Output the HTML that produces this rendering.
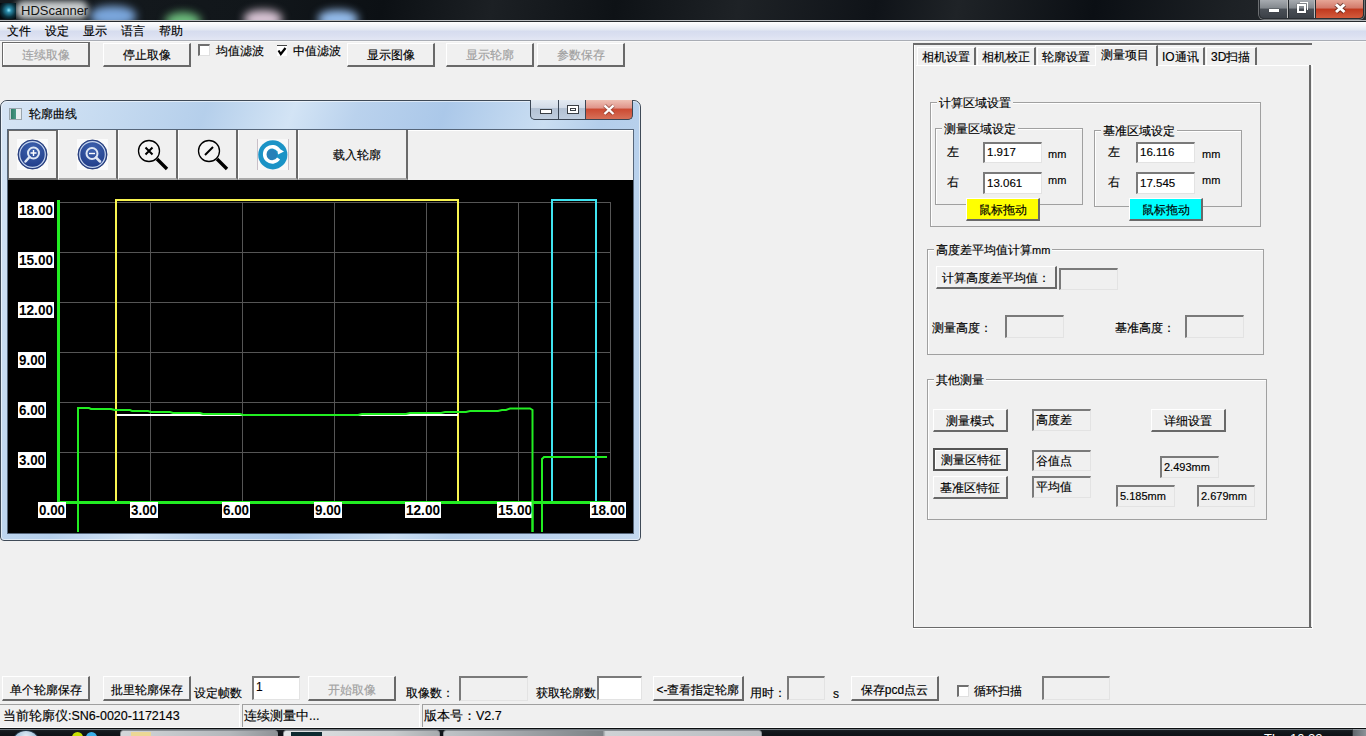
<!DOCTYPE html>
<html><head><meta charset="utf-8">
<style>
*{box-sizing:border-box;margin:0;padding:0}
html,body{width:1366px;height:736px;overflow:hidden;background:#f0f0f0;font-family:"Liberation Sans",sans-serif;font-size:12px;color:#000}
.t,.btn,.edit,.gt{-webkit-text-stroke:0.15px currentColor}
.a{position:absolute}
.t{position:absolute;white-space:nowrap;line-height:12px;font-size:12px}
/* classic 3d button */
.btn{position:absolute;background:#f0f0f0;border-top:1px solid #fff;border-left:1px solid #fff;border-right:2px solid #696969;border-bottom:2px solid #696969;text-align:center;white-space:nowrap;font-size:12px;line-height:12px}
.btn span{position:absolute;left:0;right:0;top:50%;margin-top:-5.5px}
.b25 span{margin-top:-4.5px}
.dis{color:#a0a0a0}
.edit{position:absolute;background:#fff;border-top:2px solid #7a7a7a;border-left:2px solid #7a7a7a;border-right:1px solid #e3e3e3;border-bottom:1px solid #e3e3e3;font-size:12px;line-height:12px;white-space:nowrap;padding-left:2px}
.ro{background:#f0f0f0}
.grp{position:absolute;border:1px solid #a0a0a0;box-shadow:1px 1px 0 #fff inset}
.grp .gt{position:absolute;top:-6px;left:6px;background:#f0f0f0;padding:0 2px;line-height:12px;font-size:12px;white-space:nowrap}
.chk{position:absolute;width:12px;height:12px;background:#fff;border-top:2px solid #6f6f6f;border-left:2px solid #6f6f6f;border-right:1px solid #e0e0e0;border-bottom:1px solid #e0e0e0}
</style></head><body>

<!-- title bar -->
<div class="a" style="left:0;top:0;width:1366px;height:20px;background:linear-gradient(100deg,#151a1e 0%,#11161a 20%,#0c1014 28%,#1c2024 36%,#0e1216 45%,#1e2226 54%,#0f1318 64%,#1f2327 70%,#0b0f14 80%,#1d2125 90%,#2a2e32 100%)"></div>
<div class="a" style="left:90px;top:6px;width:46px;height:20px;border-radius:45%;background:#7aa6dc;filter:blur(4px);opacity:1"></div>
<div class="a" style="left:165px;top:12px;width:36px;height:18px;border-radius:50%;background:#6cbc7c;filter:blur(4px);opacity:1"></div>
<div class="a" style="left:244px;top:10px;width:38px;height:18px;border-radius:45%;background:#d8c4d4;filter:blur(4px);opacity:1"></div>
<div class="a" style="left:318px;top:10px;width:40px;height:18px;border-radius:45%;background:#94bcec;filter:blur(4px);opacity:1"></div>
<div class="a" style="left:16px;top:1px;width:72px;height:18px;border-radius:8px;background:rgba(235,238,240,.85);filter:blur(3px)"></div>
<div class="a" style="left:0;top:3px;width:16px;height:16px;background:radial-gradient(ellipse at 55% 45%,#8fe8ff 0,#2a8aa8 20%,#0b3340 55%,#050a0e 85%)"></div>
<div class="a" style="left:21px;top:3px;font:13px/15px 'Liberation Sans',sans-serif;color:#141414">HDScanner</div>
<div class="a" style="left:0;top:20px;width:1366px;height:1px;background:#b9bcbf"></div>
<div class="a" style="left:0;top:21px;width:1366px;height:1px;background:#262a2e"></div>
<!-- window controls -->
<div class="a" style="left:1259px;top:0;width:105px;height:19px;border:1px solid #2a2e33;border-top:none;border-radius:0 0 5px 5px;overflow:hidden;box-shadow:0 0 0 1px rgba(255,255,255,.35)">
 <div class="a" style="left:0;top:0;width:28px;height:18px;background:linear-gradient(#a7abb0,#82878d 45%,#4b5057 50%,#3b4047 100%);border-right:1px solid #bbb"></div>
 <div class="a" style="left:29px;top:0;width:26px;height:18px;background:linear-gradient(#a7abb0,#82878d 45%,#4b5057 50%,#3b4047 100%);border-right:1px solid #bbb"></div>
 <div class="a" style="left:56px;top:0;width:48px;height:18px;background:linear-gradient(#e6a596,#d2796a 45%,#c0381e 50%,#d35b3c 100%)"></div>
 <div class="a" style="left:9px;top:9px;width:10px;height:3px;background:#fff;box-shadow:0 0 1px #222"></div>
 <div class="a" style="left:37px;top:4px;width:9px;height:9px;border:2px solid #fff;box-shadow:0 0 1px #222"></div>
 <div class="a" style="left:40px;top:2px;width:8px;height:8px;border-top:1px solid #fff;border-right:1px solid #fff"></div>
 <svg class="a" style="left:56px;top:0" width="48" height="18"><path d="M20 4.5l8.5 7.5M28.5 4.5l-8.5 7.5" stroke="#3a1a14" stroke-opacity=".6" stroke-width="5"/><path d="M20 4.5l8.5 7.5M28.5 4.5l-8.5 7.5" stroke="#fff" stroke-width="3"/></svg>
</div>

<!-- menu bar -->
<div class="a" style="left:0;top:22px;width:1366px;height:18px;background:linear-gradient(#ffffff 0,#f3f5fa 20%,#e2e7f2 45%,#d6dcef 50%,#dbe0f1 75%,#e3e7f4 100%)"></div>
<div class="a" style="left:0;top:40px;width:1366px;height:1px;background:#a9adb5"></div>
<div class="a" style="left:0;top:41px;width:1366px;height:1px;background:#f8f8f8"></div>
<div class="t" style="left:7px;top:25px">文件</div>
<div class="t" style="left:45px;top:25px">设定</div>
<div class="t" style="left:83px;top:25px">显示</div>
<div class="t" style="left:121px;top:25px">语言</div>
<div class="t" style="left:159px;top:25px">帮助</div>

<!-- top toolbar -->
<div class="btn dis" style="left:2px;top:42px;width:88px;height:25px;border-top:1px solid #6a6a6a;border-left:1px solid #6a6a6a;box-shadow:inset 1px 1px 0 #fff"><span>连续取像</span></div>
<div class="btn" style="left:103px;top:43px;width:88px;height:24px"><span>停止取像</span></div>
<div class="chk" style="left:198px;top:44px"></div>
<div class="t" style="left:216px;top:45px">均值滤波</div>
<div class="a" style="left:277px;top:45px;width:10px;height:11px;background:#fff;border-top:1px solid #444"><svg class="a" style="left:0;top:0" width="10" height="10"><path d="M1.5 4.5l2.3 3.5l4.7-6" stroke="#000" stroke-width="2.2" fill="none"/></svg></div>
<div class="t" style="left:293px;top:45px">中值滤波</div>
<div class="btn" style="left:347px;top:43px;width:88px;height:24px"><span>显示图像</span></div>
<div class="btn dis" style="left:446px;top:43px;width:88px;height:24px"><span>显示轮廓</span></div>
<div class="btn dis" style="left:537px;top:43px;width:88px;height:24px"><span>参数保存</span></div>


<!-- chart window -->
<div class="a" style="left:0;top:100px;width:641px;height:441px;border:1px solid #3f4a57;border-radius:7px 7px 4px 4px;background:linear-gradient(110deg,#d6e5f5 0%,#c8dcf1 12%,#b5cfeb 26%,#d3e4f5 37%,#bad2ed 45%,#abc8e9 56%,#cadef2 69%,#b4ceeb 76%,#c3d8ef 100%)"></div>
<div class="a" style="left:1px;top:101px;width:639px;height:439px;border:1px solid rgba(255,255,255,.55);border-radius:6px 6px 3px 3px"></div>
<div class="a" style="left:9px;top:108px;width:13px;height:12px;background:linear-gradient(90deg,#c8d0d6 0,#c8d0d6 1px,#2f7c67 1px,#4a9a86 6px,#e9eef1 6px);border:1px solid #9aa6ae"></div>
<div class="t" style="left:29px;top:108px">轮廓曲线</div>
<!-- window buttons -->
<div class="a" style="left:530px;top:100px;width:103px;height:20px;border:1px solid #3b4654;border-top:none;border-radius:0 0 5px 5px;overflow:hidden;background:#3b4654">
 <div class="a" style="left:0;top:0;width:27px;height:19px;background:linear-gradient(#e3eaf2,#d3dce8 40%,#b3c1d3 45%,#c0cedf 100%)"></div>
 <div class="a" style="left:28px;top:0;width:26px;height:19px;background:linear-gradient(#e3eaf2,#d3dce8 40%,#b3c1d3 45%,#c0cedf 100%)"></div>
 <div class="a" style="left:55px;top:0;width:47px;height:19px;background:linear-gradient(#efc0b4,#e0948a 42%,#cc4a32 48%,#d77058 100%)"></div>
 <div class="a" style="left:9px;top:9px;width:12px;height:5px;background:#fff;border:1px solid #3a3f45"></div>
 <div class="a" style="left:36px;top:5px;width:12px;height:9px;border:1px solid #3a3f45;background:#fff"><div class="a" style="left:2px;top:2px;width:6px;height:3px;border:1px solid #3a3f45"></div></div>
 <svg class="a" style="left:55px;top:0" width="47" height="19"><path d="M18.5 5.5l9 8.5M27.5 5.5l-9 8.5" stroke="#7a3a30" stroke-opacity=".55" stroke-width="4.2"/><path d="M18.5 5.5l9 8.5M27.5 5.5l-9 8.5" stroke="#fff" stroke-width="2.4"/></svg>
</div>
<!-- client -->
<div class="a" style="left:7px;top:129px;width:627px;height:405px;background:#f0f0f0;border:1px solid #56667a"></div>
<div class="a" style="left:8px;top:130px;width:625px;height:1px;background:#fff"></div>
<!-- toolbar buttons -->
<div class="a" style="left:8px;top:130px;width:50px;height:50px;border:2px solid #696969;border-top:1px solid #696969;border-left:1px solid #696969;background:#f0f0f0"></div>
<div class="a" style="left:58px;top:130px;width:60px;height:50px;border-left:1px solid #fff;border-right:2px solid #6a6a6a;border-bottom:2px solid #a9a9a9;background:#f0f0f0"></div>
<div class="a" style="left:118px;top:130px;width:60px;height:50px;border-left:1px solid #fff;border-right:2px solid #6a6a6a;border-bottom:2px solid #a9a9a9;background:#f0f0f0"></div>
<div class="a" style="left:178px;top:130px;width:60px;height:50px;border-left:1px solid #fff;border-right:2px solid #6a6a6a;border-bottom:2px solid #a9a9a9;background:#f0f0f0"></div>
<div class="a" style="left:238px;top:130px;width:60px;height:50px;border-left:1px solid #fff;border-right:2px solid #6a6a6a;border-bottom:2px solid #a9a9a9;background:#f0f0f0"></div>
<div class="a" style="left:298px;top:130px;width:110px;height:50px;border-left:1px solid #fff;border-right:2px solid #6a6a6a;border-bottom:2px solid #a9a9a9;background:#f0f0f0"></div>
<div class="t" style="left:333px;top:149px">载入轮廓</div>
<svg class="a" style="left:0;top:0" width="640" height="545" viewBox="0 0 640 545">
 <defs><radialGradient id="bg1" cx="50%" cy="30%" r="70%"><stop offset="0" stop-color="#3f64b0"/><stop offset="1" stop-color="#1f3a86"/></radialGradient></defs>
 <rect x="17" y="139" width="31" height="31" fill="#fbfbfb"/>
 <circle cx="32.5" cy="154.5" r="14.5" fill="url(#bg1)" stroke="#263c78" stroke-width="1"/>
 <circle cx="32.5" cy="154.5" r="12.8" fill="none" stroke="#c6d4ec" stroke-width="1.2"/>
 <circle cx="33.5" cy="153" r="5.5" fill="none" stroke="#dfe7f4" stroke-width="2"/>
 <path d="M29.5 157 L25.5 161.5" stroke="#dfe7f4" stroke-width="2.5" stroke-linecap="round"/>
 <path d="M30.5 153h6M33.5 150v6" stroke="#fff" stroke-width="1.4"/>
 <rect x="77" y="139" width="31" height="31" fill="#fbfbfb"/>
 <circle cx="92.5" cy="154.5" r="14.5" fill="url(#bg1)" stroke="#263c78" stroke-width="1"/>
 <circle cx="92.5" cy="154.5" r="12.8" fill="none" stroke="#c6d4ec" stroke-width="1.2"/>
 <circle cx="92" cy="153.5" r="5.5" fill="none" stroke="#dfe7f4" stroke-width="2"/>
 <path d="M96 157.5 L100 161.5" stroke="#dfe7f4" stroke-width="2.5" stroke-linecap="round"/>
 <path d="M89 153.5h6" stroke="#fff" stroke-width="1.4"/>
 <circle cx="149" cy="151" r="10.5" fill="#f4f4f4" stroke="#000" stroke-width="1.3"/>
 <path d="M145.5 147.5l7 7M152.5 147.5l-7 7" stroke="#000" stroke-width="2"/>
 <path d="M157 159l10 10" stroke="#000" stroke-width="3.4"/>
 <circle cx="209" cy="151" r="10.5" fill="#f4f4f4" stroke="#000" stroke-width="1.3"/>
 <path d="M205 155l8 -8" stroke="#000" stroke-width="2"/>
 <path d="M217 159l10 10" stroke="#000" stroke-width="3.4"/>
 <rect x="257" y="139" width="32" height="31" fill="#f8f8f8"/>
 <path d="M257.5 139v31M288.5 139v31" stroke="#c8c0c8" stroke-width="1"/>
 <circle cx="272.8" cy="154.8" r="14.6" fill="#1b93c6"/>
 <circle cx="271.5" cy="155" r="5.5" fill="#2780b8"/>
 <path d="M278.6 158.6 A7.6 7.6 0 1 1 278.8 150.4" fill="none" stroke="#fff" stroke-width="3.6"/>
 <path d="M277 147.2l7 4.3l-6 3z" fill="#fff"/>
</svg>
<!-- plot -->
<svg class="a" style="left:0;top:0" width="640" height="545" viewBox="0 0 640 545">
 <rect x="8" y="180" width="625" height="353" fill="#000"/>
 <g stroke="#555" stroke-width="1">
  <path d="M58 202.5H611M58 252.5H611M58 302.5H611M58 352.5H611M58 402.5H611M58 452.5H611"/>
  <path d="M150.5 202V502M242.5 202V502M334.5 202V502M426.5 202V502M518.5 202V502M610.5 202V502"/>
 </g>
 <g fill="none" stroke-width="2">
  <path d="M116 502V200H458V502" stroke="#f8f450"/>
  <path d="M116.5 415H458" stroke="#fff"/>
  <path d="M552 502V200H596V502" stroke="#40e4f0"/>
 </g>
 <g fill="none" stroke="#22ee22">
  <path d="M58.5 502V200" stroke-width="3"/>
  <path d="M58 502.5H610" stroke-width="3"/>
  <path d="M78 532V408H89L91 409H111L115 410H130L132 411H148L151 412H170L173 413H200L203 414H240L243 415H358L362 414H406L410 413H441L445 412H466L470 411H498L502 410H506L510 408.5H530L532.5 410V532" stroke-width="2"/>
  <path d="M542 532V459L544 457H607" stroke-width="2"/>
 </g>
 <g style="font-family:'Liberation Sans',sans-serif;font-weight:bold;font-size:14px">
  <rect x="18" y="202" width="36" height="16" fill="#fff"/><text x="19" y="215" textLength="34" lengthAdjust="spacingAndGlyphs">18.00</text>
  <rect x="18" y="252" width="36" height="16" fill="#fff"/><text x="19" y="265" textLength="34" lengthAdjust="spacingAndGlyphs">15.00</text>
  <rect x="18" y="302" width="36" height="16" fill="#fff"/><text x="19" y="315" textLength="34" lengthAdjust="spacingAndGlyphs">12.00</text>
  <rect x="18" y="352" width="28" height="16" fill="#fff"/><text x="19" y="365" textLength="26" lengthAdjust="spacingAndGlyphs">9.00</text>
  <rect x="18" y="402" width="28" height="16" fill="#fff"/><text x="19" y="415" textLength="26" lengthAdjust="spacingAndGlyphs">6.00</text>
  <rect x="18" y="452" width="28" height="16" fill="#fff"/><text x="19" y="465" textLength="26" lengthAdjust="spacingAndGlyphs">3.00</text>
  <rect x="38" y="502" width="28" height="16" fill="#fff"/><text x="39" y="515" textLength="26" lengthAdjust="spacingAndGlyphs">0.00</text>
  <rect x="130" y="502" width="28" height="16" fill="#fff"/><text x="131" y="515" textLength="26" lengthAdjust="spacingAndGlyphs">3.00</text>
  <rect x="222" y="502" width="28" height="16" fill="#fff"/><text x="223" y="515" textLength="26" lengthAdjust="spacingAndGlyphs">6.00</text>
  <rect x="314" y="502" width="28" height="16" fill="#fff"/><text x="315" y="515" textLength="26" lengthAdjust="spacingAndGlyphs">9.00</text>
  <rect x="405" y="502" width="36" height="16" fill="#fff"/><text x="406" y="515" textLength="34" lengthAdjust="spacingAndGlyphs">12.00</text>
  <rect x="497" y="502" width="36" height="16" fill="#fff"/><text x="498" y="515" textLength="34" lengthAdjust="spacingAndGlyphs">15.00</text>
  <rect x="590" y="502" width="36" height="16" fill="#fff"/><text x="591" y="515" textLength="34" lengthAdjust="spacingAndGlyphs">18.00</text>
 </g>
 <path d="M532.5 500V532" stroke="#22ee22" stroke-width="2"/>
</svg>

<!-- right tab panel -->
<div class="a" style="left:913px;top:43px;width:399px;height:585px;border-top:2px solid #6a6a6a;border-left:1px solid #6a6a6a;border-bottom:1px solid #6a6a6a;background:#f0f0f0"></div>
<div class="a" style="left:914px;top:45px;width:1px;height:582px;background:#fff"></div>
<div class="a" style="left:913px;top:628px;width:400px;height:1px;background:#fff"></div>
<div class="a" style="left:1312px;top:65px;width:1px;height:564px;background:#fff"></div>
<!-- tab page border -->
<div class="a" style="left:916px;top:65px;width:396px;height:1px;background:#fff"></div>
<div class="a" style="left:1309px;top:65px;width:2px;height:563px;background:#6a6a6a"></div>
<div class="a" style="left:913px;top:627px;width:398px;height:1px;background:#6a6a6a"></div>
<div class="a" style="left:917px;top:47px;width:59px;height:18px;border-top:1px solid #fff;border-left:1px solid #fff;border-right:2px solid #6a6a6a"></div>
<div class="a" style="left:977px;top:47px;width:59px;height:18px;border-top:1px solid #fff;border-left:1px solid #fff;border-right:2px solid #6a6a6a"></div>
<div class="a" style="left:1037px;top:47px;width:58px;height:18px;border-top:1px solid #fff;border-left:1px solid #fff"></div>
<div class="a" style="left:1095px;top:45px;width:63px;height:21px;border-top:1px solid #fff;border-left:1px solid #fff;border-right:2px solid #6a6a6a;background:#f0f0f0"></div>
<div class="a" style="left:1158px;top:47px;width:47px;height:18px;border-top:1px solid #fff;border-right:2px solid #6a6a6a"></div>
<div class="a" style="left:1206px;top:47px;width:51px;height:18px;border-top:1px solid #fff;border-left:1px solid #fff;border-right:2px solid #6a6a6a"></div>
<div class="t" style="left:922px;top:51px">相机设置</div>
<div class="t" style="left:982px;top:51px">相机校正</div>
<div class="t" style="left:1042px;top:51px">轮廓设置</div>
<div class="t" style="left:1101px;top:49px">测量项目</div>
<div class="t" style="left:1162px;top:51px">IO通讯</div>
<div class="t" style="left:1211px;top:51px">3D扫描</div>

<!-- group 计算区域设置 -->
<div class="grp" style="left:930px;top:102px;width:331px;height:125px"><div class="gt">计算区域设置</div></div>
<div class="grp" style="left:935px;top:128px;width:148px;height:77px"><div class="gt">测量区域设定</div></div>
<div class="grp" style="left:1094px;top:130px;width:148px;height:77px"><div class="gt">基准区域设定</div></div>
<div class="t" style="left:947px;top:146px">左</div>
<div class="t" style="left:947px;top:176px">右</div>
<div class="edit" style="left:983px;top:142px;width:59px;height:21px;padding-top:2px;font-size:11.5px">1.917</div>
<div class="edit" style="left:983px;top:172px;width:59px;height:22px;padding-top:3px;font-size:11.5px">13.061</div>
<div class="t" style="left:1048px;top:148px;font-size:11px">mm</div>
<div class="t" style="left:1048px;top:174px;font-size:11px">mm</div>
<div class="t" style="left:1108px;top:146px">左</div>
<div class="t" style="left:1108px;top:176px">右</div>
<div class="edit" style="left:1136px;top:142px;width:59px;height:21px;padding-top:2px;font-size:11.5px">16.116</div>
<div class="edit" style="left:1136px;top:172px;width:59px;height:22px;padding-top:3px;font-size:11.5px">17.545</div>
<div class="t" style="left:1202px;top:148px;font-size:11px">mm</div>
<div class="t" style="left:1202px;top:174px;font-size:11px">mm</div>
<div class="btn" style="left:966px;top:198px;width:74px;height:23px;background:#ffff00"><span>鼠标拖动</span></div>
<div class="btn" style="left:1129px;top:198px;width:74px;height:23px;background:#00ffff"><span>鼠标拖动</span></div>

<!-- group 高度差平均值计算mm -->
<div class="grp" style="left:927px;top:249px;width:337px;height:106px"><div class="gt">高度差平均值计算<span style="font-size:11px">mm</span></div></div>
<div class="btn" style="left:936px;top:266px;width:121px;height:23px"><span>计算高度差平均值：</span></div>
<div class="edit ro" style="left:1059px;top:268px;width:59px;height:22px"></div>
<div class="t" style="left:932px;top:322px">测量高度：</div>
<div class="edit ro" style="left:1005px;top:315px;width:59px;height:23px"></div>
<div class="t" style="left:1115px;top:322px">基准高度：</div>
<div class="edit ro" style="left:1185px;top:315px;width:59px;height:23px"></div>

<!-- group 其他测量 -->
<div class="grp" style="left:927px;top:379px;width:340px;height:141px"><div class="gt">其他测量</div></div>
<div class="btn" style="left:933px;top:409px;width:75px;height:23px"><span>测量模式</span></div>
<div class="edit ro" style="left:1032px;top:409px;width:59px;height:22px;padding-top:3px">高度差</div>
<div class="btn" style="left:1151px;top:409px;width:75px;height:23px"><span>详细设置</span></div>
<div class="btn" style="left:933px;top:448px;width:75px;height:23px;border:2px solid #555;box-shadow:inset 1px 1px 0 #fff"><span>测量区特征</span></div>
<div class="edit ro" style="left:1032px;top:450px;width:59px;height:21px;padding-top:3px">谷值点</div>
<div class="btn" style="left:933px;top:476px;width:75px;height:23px"><span>基准区特征</span></div>
<div class="edit ro" style="left:1032px;top:476px;width:59px;height:22px;padding-top:3px">平均值</div>
<div class="edit ro" style="left:1160px;top:456px;width:59px;height:22px;padding-top:3px;font-size:11px">2.493mm</div>
<div class="edit ro" style="left:1116px;top:485px;width:59px;height:22px;padding-top:3px;font-size:11px">5.185mm</div>
<div class="edit ro" style="left:1197px;top:485px;width:58px;height:22px;padding-top:3px;font-size:11px">2.679mm</div>

<!-- bottom toolbar -->
<div class="btn b25" style="left:2px;top:676px;width:88px;height:25px"><span>单个轮廓保存</span></div>
<div class="btn b25" style="left:103px;top:676px;width:88px;height:25px"><span>批里轮廓保存</span></div>
<div class="t" style="left:194px;top:687px">设定帧数</div>
<div class="edit" style="left:252px;top:676px;width:48px;height:24px;padding-top:3px">1</div>
<div class="btn dis b25" style="left:308px;top:676px;width:88px;height:25px"><span>开始取像</span></div>
<div class="t" style="left:406px;top:687px">取像数：</div>
<div class="edit ro" style="left:459px;top:676px;width:69px;height:25px"></div>
<div class="t" style="left:536px;top:687px">获取轮廓数</div>
<div class="edit" style="left:597px;top:676px;width:45px;height:24px"></div>
<div class="btn b25" style="left:653px;top:676px;width:91px;height:25px"><span>&lt;-查看指定轮廓</span></div>
<div class="t" style="left:750px;top:687px">用时：</div>
<div class="edit ro" style="left:787px;top:676px;width:38px;height:24px"></div>
<div class="t" style="left:833px;top:688px">s</div>
<div class="btn b25" style="left:851px;top:676px;width:88px;height:25px"><span>保存pcd点云</span></div>
<div class="chk" style="left:957px;top:685px"></div>
<div class="t" style="left:974px;top:685px">循环扫描</div>
<div class="edit ro" style="left:1042px;top:676px;width:68px;height:24px"></div>

<!-- status bar -->
<div class="a" style="left:0;top:704px;width:240px;height:23px;border-top:1px solid #a0a0a0;border-right:1px solid #fff"></div>
<div class="a" style="left:242px;top:704px;width:178px;height:23px;border-top:1px solid #a0a0a0;border-left:1px solid #a0a0a0;border-right:1px solid #fff"></div>
<div class="a" style="left:422px;top:704px;width:944px;height:23px;border-top:1px solid #a0a0a0;border-left:1px solid #a0a0a0"></div>
<div class="t" style="left:3px;top:710px;font-size:12.5px">当前轮廓仪:SN6-0020-1172143</div>
<div class="t" style="left:244px;top:710px;font-size:12.5px">连续测量中...</div>
<div class="t" style="left:424px;top:710px;font-size:12.5px">版本号：V2.7</div>

<!-- taskbar -->
<div class="a" style="left:0;top:727px;width:1366px;height:1px;background:#fbfbfb"></div>
<div class="a" style="left:0;top:728px;width:1366px;height:8px;background:linear-gradient(#0b0e10 0,#0b0e10 1px,#737a80 1px,#737a80 2px,#1a2024 2px,#12171b 4px,#0e1216)"></div>
<div class="a" style="left:12px;top:731px;width:28px;height:28px;border-radius:50%;background:radial-gradient(circle at 50% 20%,#e5eef5,#8cb3d3 50%,#2f6795);box-shadow:0 0 0 1px #23384a"></div>
<div class="a" style="left:72px;top:732px;width:11px;height:11px;border-radius:50%;background:#c8e000"></div>
<div class="a" style="left:86px;top:732px;width:11px;height:11px;border-radius:50%;background:#3ab0ea"></div>
<div class="a" style="left:120px;top:730px;width:158px;height:7px;border:1px solid #8a8f94;border-radius:3px 3px 0 0;background:linear-gradient(90deg,#d4d7da,#b3b7bb 70%,#8e9296)"></div>
<div class="a" style="left:131px;top:732px;width:20px;height:5px;background:#ecd795"></div>
<div class="a" style="left:283px;top:730px;width:157px;height:7px;border:1px solid #8a8f94;border-radius:3px 3px 0 0;background:linear-gradient(90deg,#e2e4e6,#c9ccce 70%,#a7abae)"></div>
<div class="a" style="left:291px;top:732px;width:31px;height:5px;background:#0e2a30"></div>
<div class="a" style="left:443px;top:730px;width:319px;height:7px;border:1px solid #8a8f94;border-radius:3px 3px 0 0;background:linear-gradient(90deg,#c0c4c8,#7d8286 50%,#cfd2d5 51%,#b8bcc0)"></div>
<div class="a" style="left:1264px;top:732px;font:13px/13px 'Liberation Sans',sans-serif;color:#fff">Thu 10:22</div>
<div class="a" style="left:1352px;top:729px;width:14px;height:8px;background:linear-gradient(90deg,#60666c,#8c9298);border-left:1px solid #2a2e32;border-top:1px solid #9aa0a6"></div>
</body></html>
